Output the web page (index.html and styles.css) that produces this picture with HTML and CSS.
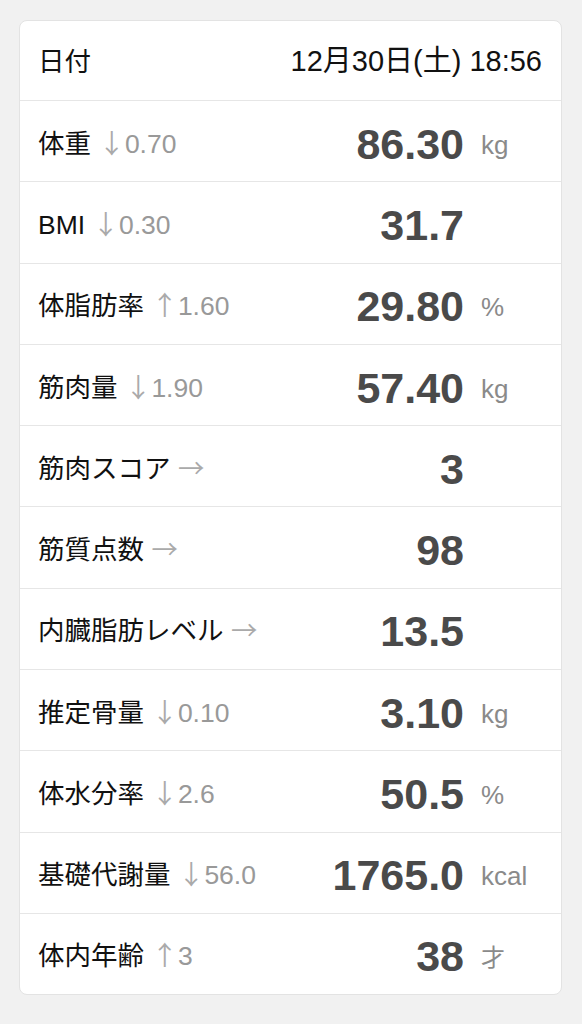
FILE: index.html
```html
<!DOCTYPE html>
<html lang="ja">
<head>
<meta charset="utf-8">
<link rel="stylesheet" href="styles.css">
</head>
<body>
<div class="card">
  <div class="row head">
    <span class="label">日付</span>
    <span class="date">12月30日(土) 18:56</span>
  </div>
  <div class="row"><span class="label">体重 <span class="delta"><span class="arr">↓</span>0.70</span></span><span class="value">86.30</span><span class="unit">kg</span></div>
  <div class="row"><span class="label">BMI <span class="delta"><span class="arr">↓</span>0.30</span></span><span class="value">31.7</span><span class="unit"></span></div>
  <div class="row"><span class="label">体脂肪率 <span class="delta"><span class="arr">↑</span>1.60</span></span><span class="value">29.80</span><span class="unit">%</span></div>
  <div class="row"><span class="label">筋肉量 <span class="delta"><span class="arr">↓</span>1.90</span></span><span class="value">57.40</span><span class="unit">kg</span></div>
  <div class="row"><span class="label">筋肉スコア <span class="delta"><span class="arr">→</span></span></span><span class="value">3</span><span class="unit"></span></div>
  <div class="row"><span class="label">筋質点数 <span class="delta"><span class="arr">→</span></span></span><span class="value">98</span><span class="unit"></span></div>
  <div class="row"><span class="label">内臓脂肪レベル <span class="delta"><span class="arr">→</span></span></span><span class="value">13.5</span><span class="unit"></span></div>
  <div class="row"><span class="label">推定骨量 <span class="delta"><span class="arr">↓</span>0.10</span></span><span class="value">3.10</span><span class="unit">kg</span></div>
  <div class="row"><span class="label">体水分率 <span class="delta"><span class="arr">↓</span>2.6</span></span><span class="value">50.5</span><span class="unit">%</span></div>
  <div class="row"><span class="label">基礎代謝量 <span class="delta"><span class="arr">↓</span>56.0</span></span><span class="value">1765.0</span><span class="unit">kcal</span></div>
  <div class="row last"><span class="label">体内年齢 <span class="delta"><span class="arr">↑</span>3</span></span><span class="value">38</span><span class="unit jp">才</span></div>
</div>
</body>
</html>
```
FILE: styles.css
```css
html, body {
  margin: 0;
  padding: 0;
}
body {
  background: #f1f1f1;
  font-family: "Liberation Sans", "Noto Sans CJK JP", sans-serif;
  width: 582px;
  height: 1024px;
  overflow: hidden;
}
.card {
  margin: 20px 0 0 19px;
  width: 543px;
  box-sizing: border-box;
  background: #fff;
  border: 1px solid #e3e3e3;
  border-radius: 8px;
}
.row {
  display: flex;
  align-items: center;
  box-sizing: border-box;
  height: 81.3px;
  padding: 0 19px 0 18px;
  border-bottom: 1px solid #e6e6e6;
}
.row.head {
  height: 80px;
  padding-bottom: 3px;
}
.row.last {
  border-bottom: none;
  height: 80px;
}
.label {
  flex: 1;
  font-size: 26.5px;
  color: #111;
  white-space: nowrap;
}
.delta {
  color: #999;
}
.arr {
  font-family: "Noto Sans CJK JP", sans-serif;
  color: #aaa;
}
.date {
  font-size: 29px;
  color: #111;
  padding-bottom: 2px;
}
.value {
  font-size: 43px;
  font-weight: bold;
  color: #4a4a4a;
  padding-top: 6px;
}
.unit {
  width: 61px;
  margin-left: 17px;
  font-size: 26px;
  color: #8a8a8a;
  padding-top: 8px;
}
.unit.jp {
  font-family: "Noto Sans CJK JP", sans-serif;
  font-size: 24px;
  padding-top: 4px;
}
```
